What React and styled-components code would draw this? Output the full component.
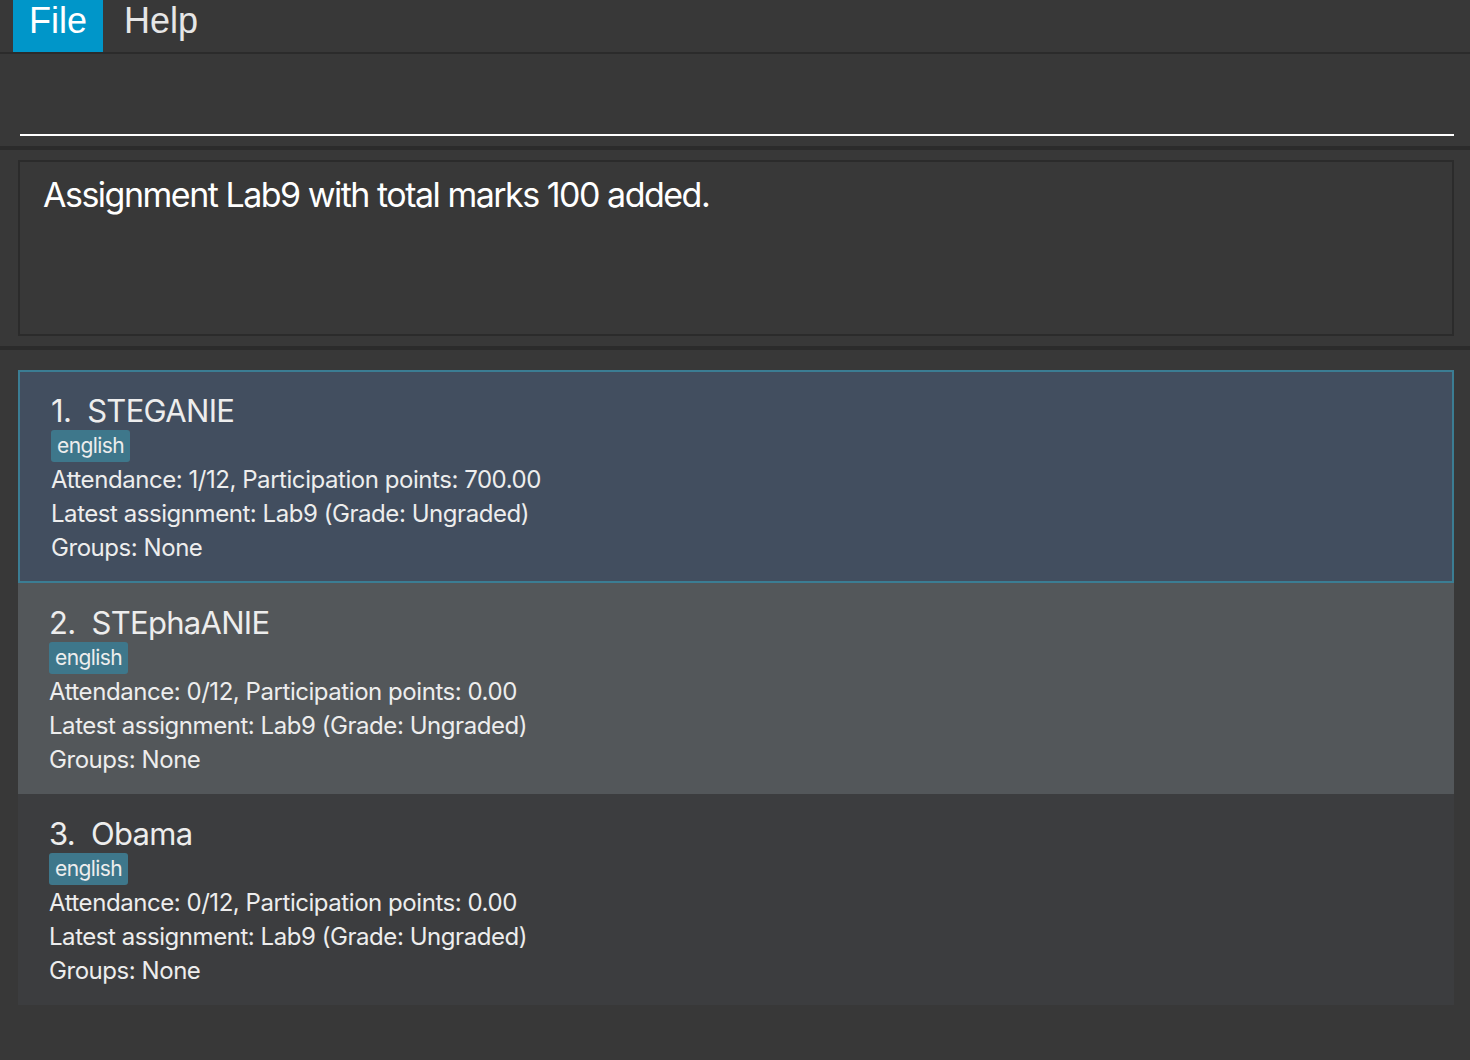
import React from "react";
import styled, { createGlobalStyle } from "styled-components";

const GlobalStyle = createGlobalStyle`
  html, body {
    margin: 0;
    padding: 0;
    background: #383838;
  }
  body {
    font-family: Inter, "Noto Sans", sans-serif;
    color: #eeeeee;
  }
  * { box-sizing: border-box; }
`;

const Root = styled.div`
  width: 1470px;
  height: 1060px;
  background: #383838;
  display: flex;
  flex-direction: column;
  overflow: hidden;
`;

const MenuBar = styled.div`
  height: 54px;
  display: flex;
  padding-left: 13px;
  border-bottom: 2px solid #2b2b2b;
  background: #383838;
`;

const MenuItem = styled.div`
  height: 52px;
  padding: 0 16px 10px;
  display: flex;
  align-items: center;
  font-family: "Liberation Sans", Arial, sans-serif;
  font-size: 36px;
  line-height: 40px;
  color: ${(p) => (p.$active ? "#ffffff" : "#e6e6e6")};
  background: ${(p) => (p.$active ? "#0096c9" : "transparent")};
  margin-right: ${(p) => (p.$active ? "5px" : "0")};
`;

const CommandBox = styled.div`
  height: 96px;
  padding: 0 16px 10px 20px;
  display: flex;
  align-items: flex-end;
  border-bottom: 4px solid #2b2b2b;
`;

const CommandInput = styled.input`
  width: 100%;
  height: 40px;
  background: transparent;
  border: none;
  border-bottom: 2px solid #ffffff;
  outline: none;
  color: #ffffff;
  font-family: Inter, sans-serif;
  font-size: 26px;
  padding: 0;
`;

const ResultPane = styled.div`
  height: 200px;
  padding: 10px 16px 10px 18px;
  border-bottom: 4px solid #2b2b2b;
`;

const ResultBox = styled.div`
  height: 176px;
  border: 2px solid #2b2b2b;
  padding: 12px 23px;
  font-size: 34px;
  line-height: 42px;
  color: #ffffff;
  letter-spacing: -1.5px;
`;

const ListPane = styled.div`
  flex: 1;
  padding: 20px 16px 0 18px;
  display: flex;
  flex-direction: column;
`;

const toneBg = {
  selected: "#424e5f",
  light: "#53575a",
  dark: "#3c3d3f",
};

const Card = styled.div`
  background: ${(p) => toneBg[p.$tone]};
  border: ${(p) => (p.$tone === "selected" ? "2px solid #3b7d93" : "none")};
  padding: ${(p) => (p.$tone === "selected" ? "20px 31px 16px" : "21px 31px 17px")};
  display: flex;
  flex-direction: column;
  align-items: flex-start;
  color: #ededed;
`;

const Name = styled.div`
  font-size: 31px;
  line-height: 38px;
  white-space: pre;
  letter-spacing: -0.7px;
`;

const Tag = styled.span`
  height: 32px;
  margin-bottom: 1px;
  padding: 0 6px;
  background: #3e778b;
  border-radius: 3px;
  font-size: 21px;
  line-height: 32px;
  color: #ededed;
  letter-spacing: -0.6px;
`;

const Line = styled.div`
  font-size: 24px;
  line-height: 34px;
  letter-spacing: -0.45px;
  white-space: pre;
`;

const students = [
  { name: "STEGANIE", att: "1/12", pts: "700.00", tone: "selected" },
  { name: "STEphaANIE", att: "0/12", pts: "0.00", tone: "light" },
  { name: "Obama", att: "0/12", pts: "0.00", tone: "dark" },
];

export default function App() {
  return (
    <>
      <GlobalStyle />
      <Root>
        <MenuBar>
          <MenuItem $active>File</MenuItem>
          <MenuItem>Help</MenuItem>
        </MenuBar>
        <CommandBox>
          <CommandInput defaultValue="" />
        </CommandBox>
        <ResultPane>
          <ResultBox>Assignment Lab9 with total marks 100 added.</ResultBox>
        </ResultPane>
        <ListPane>
          {students.map((s, i) => (
            <Card key={s.name} $tone={s.tone}>
              <Name>{`${i + 1}.  ${s.name}`}</Name>
              <Tag>english</Tag>
              <Line>{`Attendance: ${s.att}, Participation points: ${s.pts}`}</Line>
              <Line>Latest assignment: Lab9 (Grade: Ungraded)</Line>
              <Line>Groups: None</Line>
            </Card>
          ))}
        </ListPane>
      </Root>
    </>
  );
}
